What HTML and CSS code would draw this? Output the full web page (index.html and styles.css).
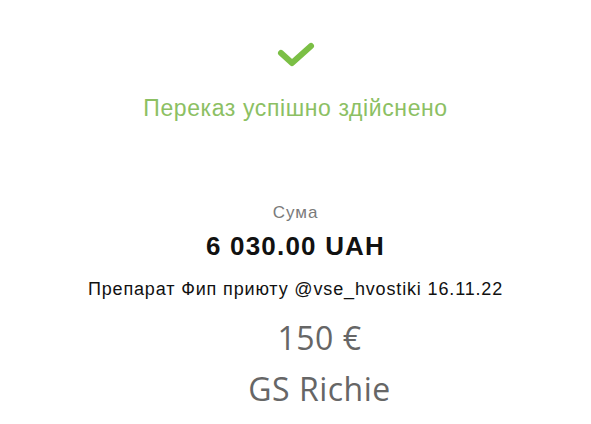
FILE: index.html
```html
<!DOCTYPE html>
<html>
<head>
<meta charset="utf-8">
<link rel="stylesheet" href="styles.css">
</head>
<body>
<main class="receipt">
  <svg class="check" width="44" height="30" viewBox="0 0 44 30">
    <path d="M7 13 L18 23 L37 6" fill="none" stroke="#7bbf45" stroke-width="6" stroke-linecap="round" stroke-linejoin="round"/>
  </svg>
  <div class="status">Переказ успішно здійснено</div>
  <div class="label">Сума</div>
  <div class="amount">6 030.00 UAH</div>
  <div class="comment">Препарат Фип приюту @vse_hvostiki 16.11.22</div>
  <div class="note">150 €</div>
  <div class="note note-second">GS Richie</div>
</main>
</body>
</html>
```
FILE: styles.css
```css
html, body {
  margin: 0;
  padding: 0;
  background: #ffffff;
}
.receipt {
  width: 591px;
  height: 424px;
  display: flex;
  flex-direction: column;
  align-items: center;
  font-family: "Liberation Sans", Arial, sans-serif;
}
.check {
  margin-top: 40px;
  display: block;
}
.status {
  margin-top: 26px;
  font-size: 23px;
  letter-spacing: 0.6px;
  color: #8cc063;
  line-height: 24px;
}
.label {
  margin-top: 83px;
  font-size: 17px;
  letter-spacing: 1px;
  color: #7a7a7a;
  line-height: 20px;
}
.amount {
  margin-top: 8px;
  font-size: 26px;
  letter-spacing: 1.2px;
  font-weight: bold;
  color: #111;
  line-height: 30px;
}
.comment {
  margin-top: 17px;
  font-size: 18px;
  letter-spacing: 0.85px;
  color: #111;
  line-height: 22px;
}
.note {
  margin-top: 15px;
  margin-left: 48px;
  font-family: "Open Sans", sans-serif;
  font-size: 32px;
  letter-spacing: 0.5px;
  color: #666;
  line-height: 46px;
}
.note-second {
  margin-top: 5px;
}
```
